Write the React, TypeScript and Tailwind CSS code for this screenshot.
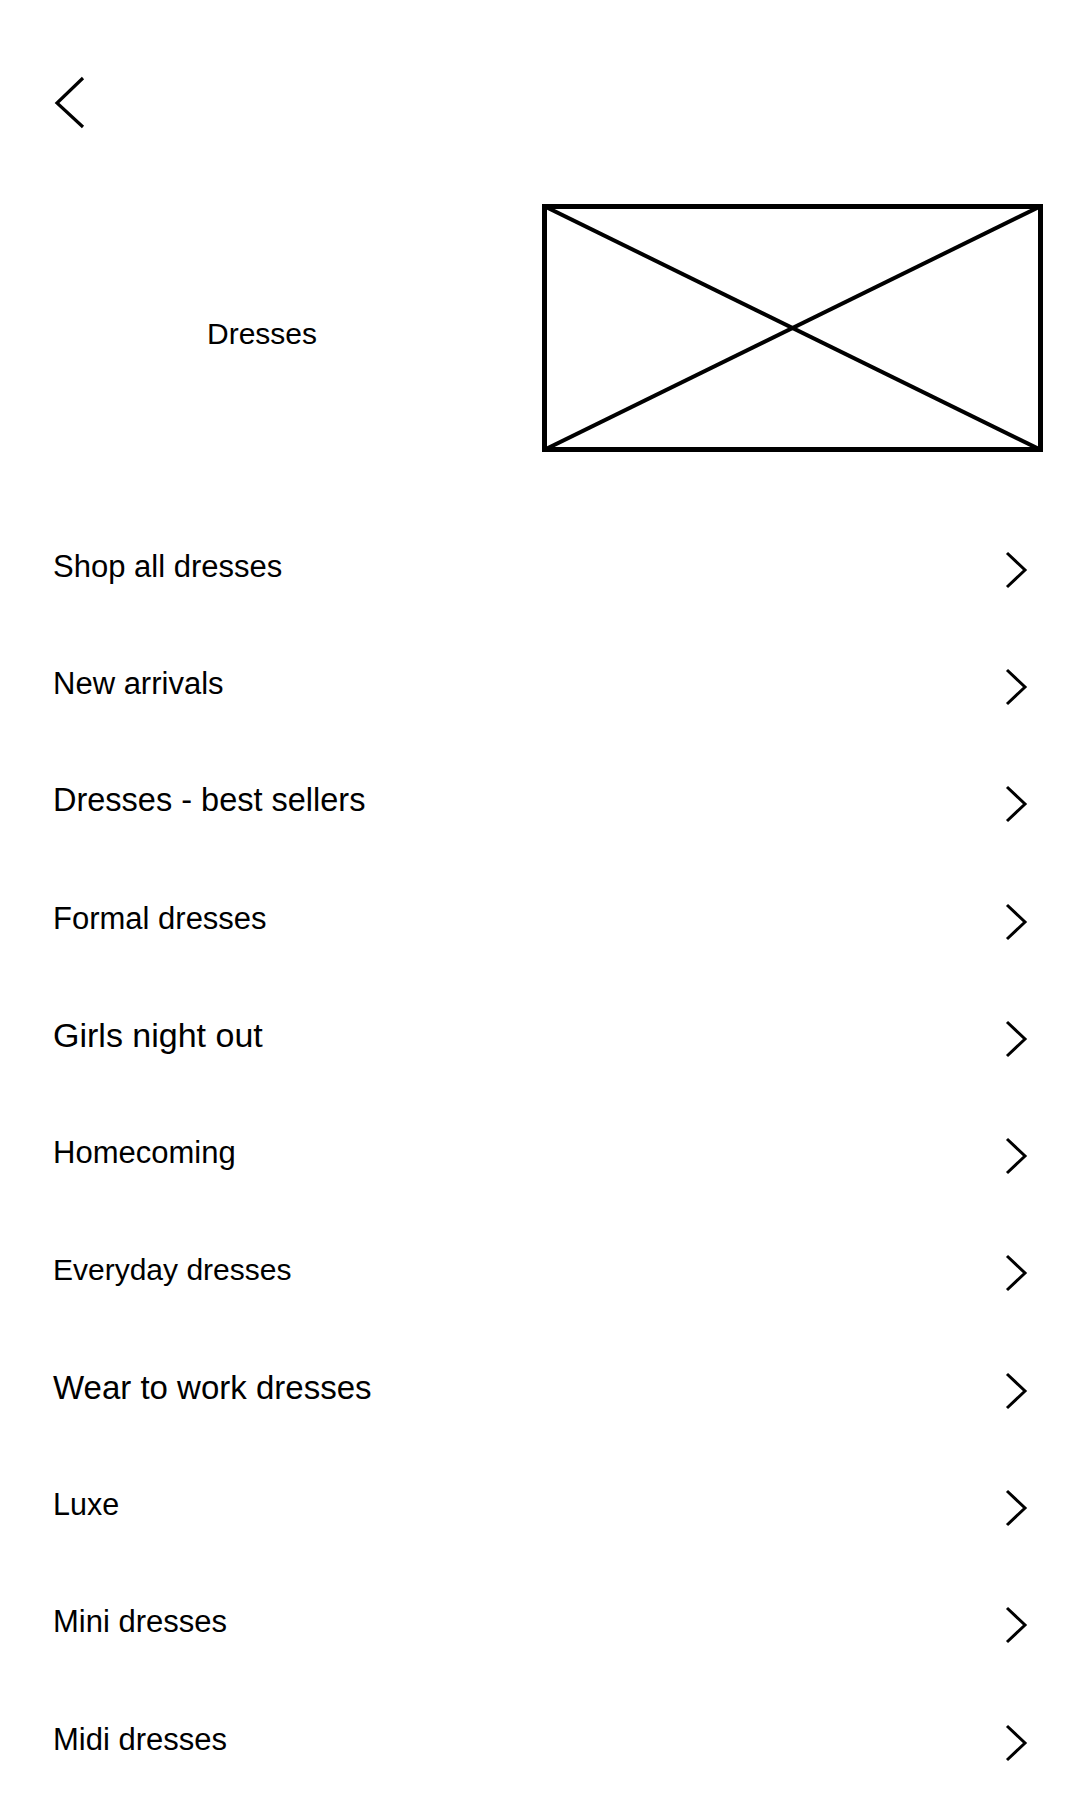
import React from "react";

const ITEMS: { label: string; size: string }[] = [
  { label: "Shop all dresses", size: "text-[31px]" },
  { label: "New arrivals", size: "text-[31px]" },
  { label: "Dresses - best sellers", size: "text-[32.5px]" },
  { label: "Formal dresses", size: "text-[31px]" },
  { label: "Girls night out", size: "text-[34px]" },
  { label: "Homecoming", size: "text-[31px]" },
  { label: "Everyday dresses", size: "text-[30px]" },
  { label: "Wear to work dresses", size: "text-[33px]" },
  { label: "Luxe", size: "text-[30.5px]" },
  { label: "Mini dresses", size: "text-[31px]" },
  { label: "Midi dresses", size: "text-[31px]" },
];

function BackArrow() {
  return (
    <svg width="34" height="56" viewBox="0 0 34 56" fill="none">
      <path d="M31 4 L5 29 L31 53" stroke="#000" strokeWidth="3.2" />
    </svg>
  );
}

function Chevron() {
  return (
    <svg width="24" height="38" viewBox="0 0 24 38" fill="none">
      <path d="M3 2 L21 19 L3 36" stroke="#000" strokeWidth="3" />
    </svg>
  );
}

export default function App() {
  return (
    <div className="min-h-screen bg-white text-black font-['Liberation_Sans',Arial,sans-serif] pl-[53px] pr-[52px]">
      {/* top bar */}
      <div className="pt-[74px]">
        <button aria-label="Back" className="block -ml-[1px]">
          <BackArrow />
        </button>
      </div>

      {/* hero */}
      <div className="mt-[74px] -mr-[15px] flex items-center">
        <div className="flex-1 mr-[71px] text-center text-[30px] pt-[11px]">Dresses</div>
        <div className="relative shrink-0 w-[501px] h-[248px] border-[5px] border-black">
          <svg
            className="absolute -inset-[3px] w-[calc(100%+6px)] h-[calc(100%+6px)]"
            viewBox="0 0 100 100"
            preserveAspectRatio="none"
          >
            <line x1="0" y1="0" x2="100" y2="100" stroke="#000" strokeWidth="4" vectorEffect="non-scaling-stroke" />
            <line x1="100" y1="0" x2="0" y2="100" stroke="#000" strokeWidth="4" vectorEffect="non-scaling-stroke" />
          </svg>
        </div>
      </div>

      {/* list */}
      <ul className="mt-[56px]">
        {ITEMS.map(({ label, size }) => (
          <li key={label} className="h-[117.3px] flex items-center justify-between">
            <span className={`${size} leading-none pb-[1px]`}>{label}</span>
            <span className="pt-[6px]">
              <Chevron />
            </span>
          </li>
        ))}
      </ul>
    </div>
  );
}
